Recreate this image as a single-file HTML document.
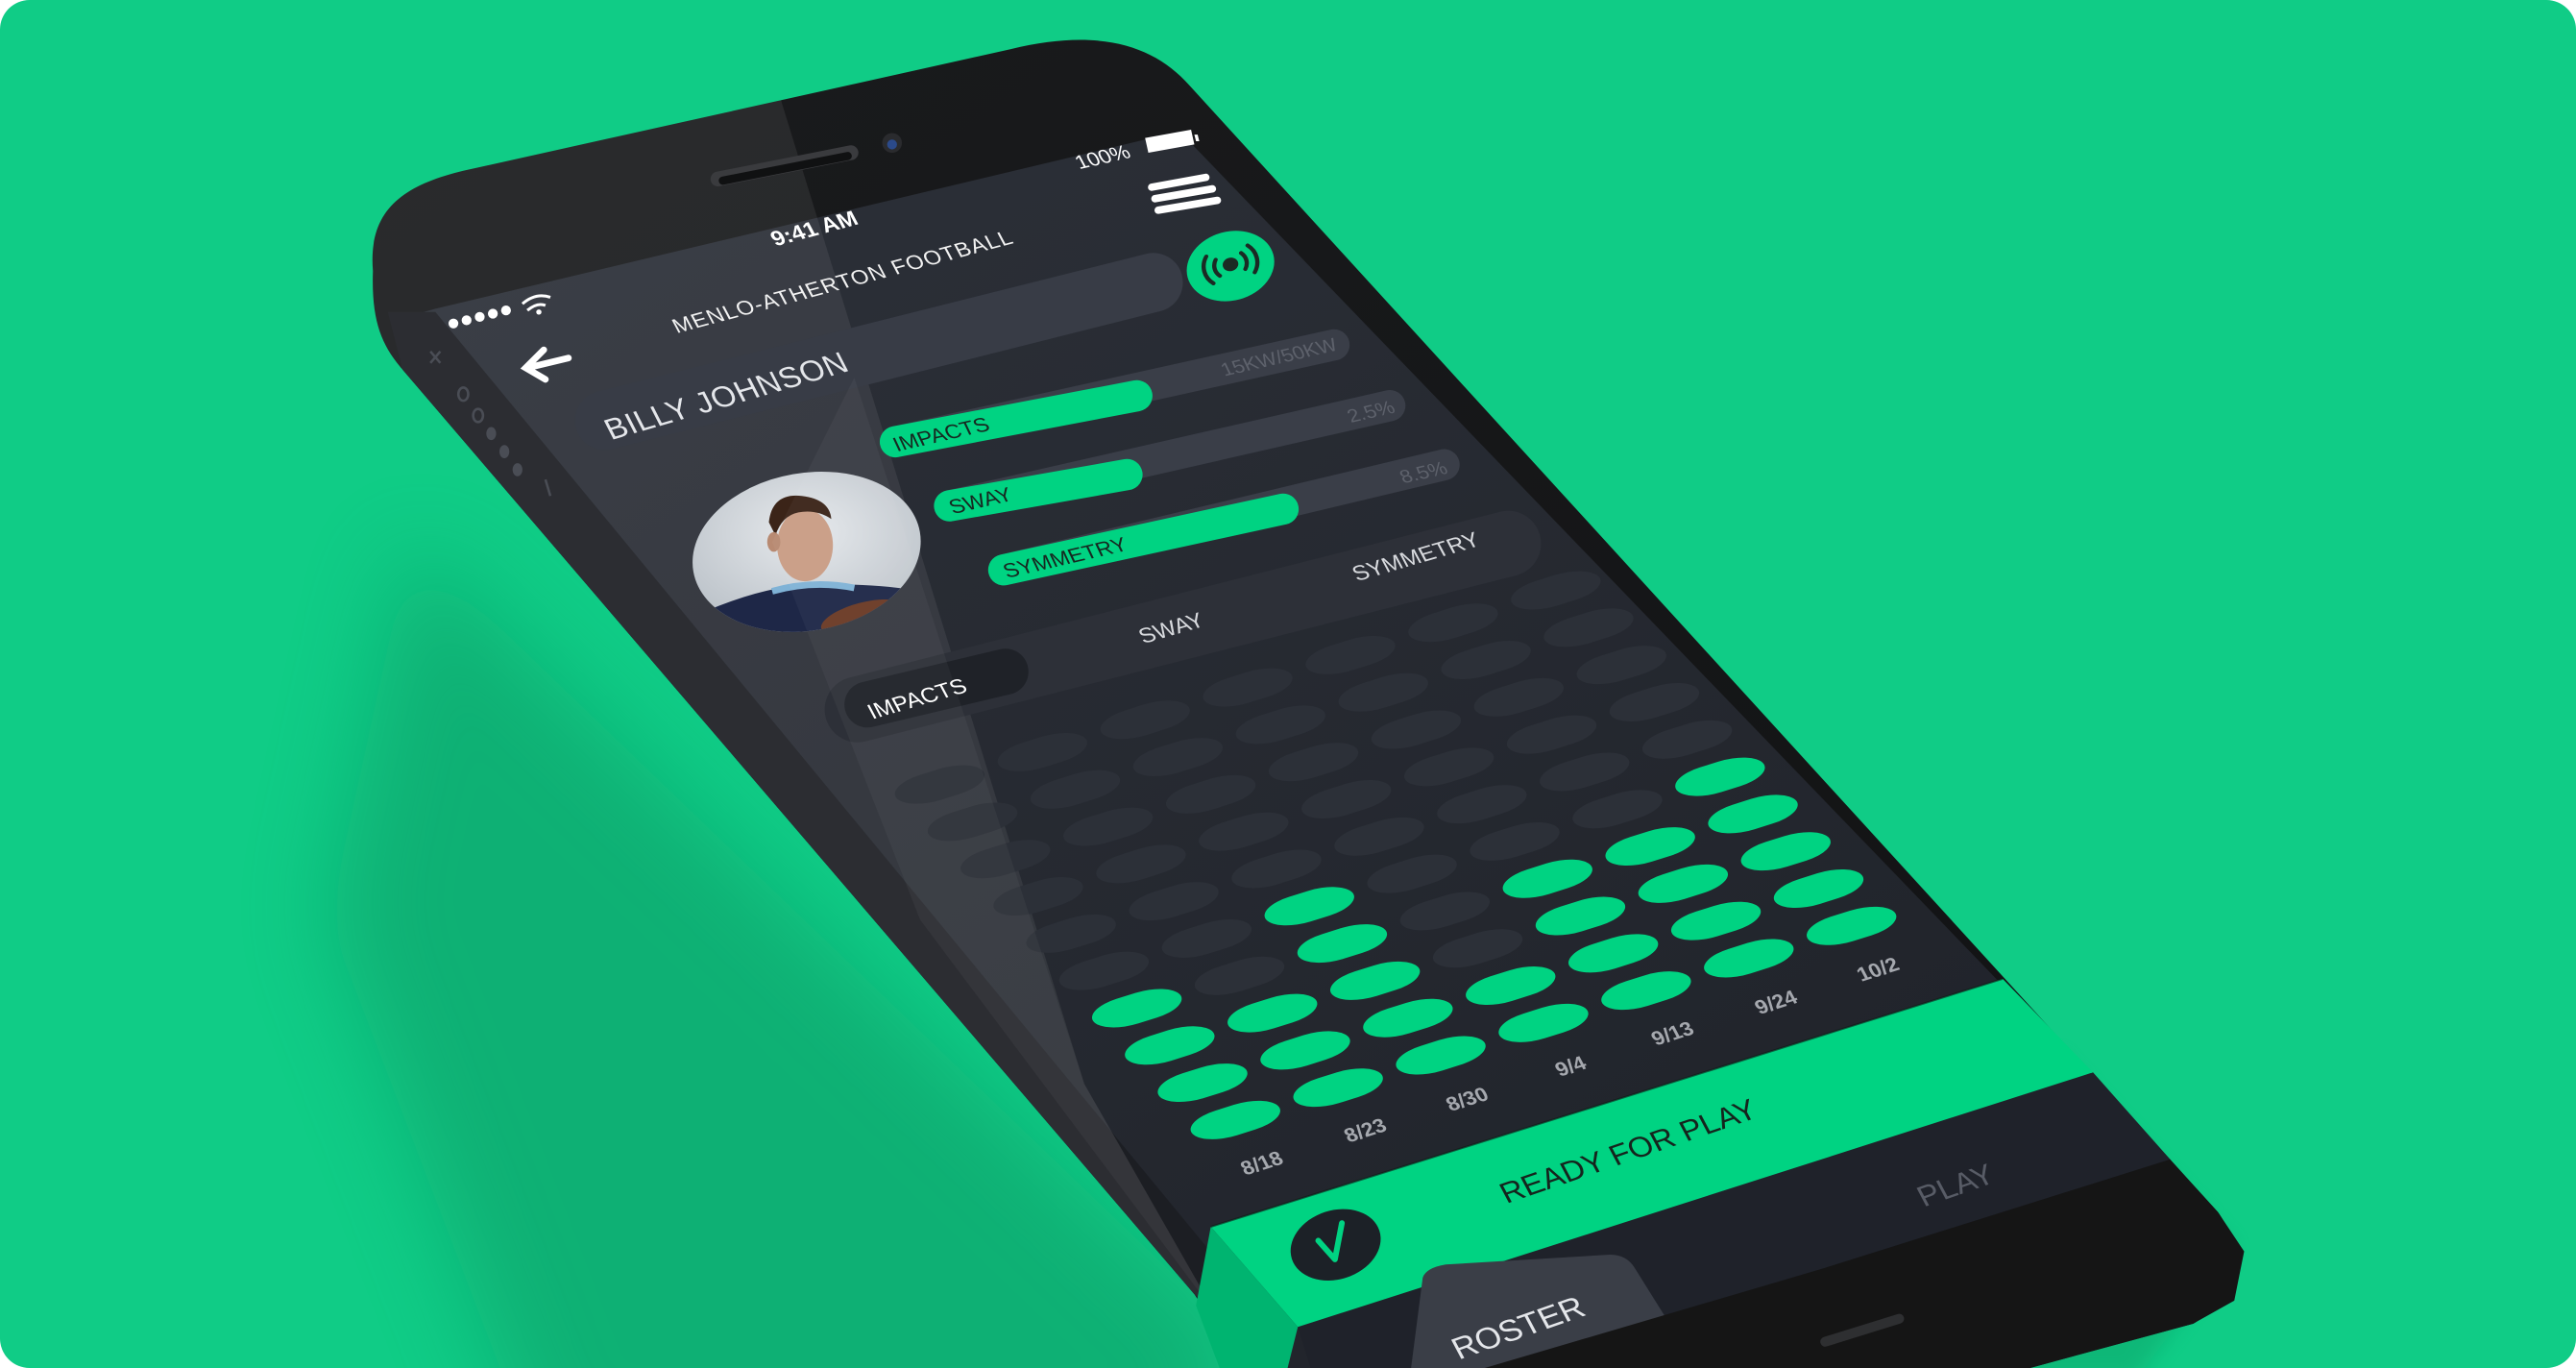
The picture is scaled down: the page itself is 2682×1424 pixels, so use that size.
<!DOCTYPE html>
<html><head><meta charset="utf-8"><style>
html,body{margin:0;padding:0;background:#fff;overflow:hidden;width:2682px;height:1424px;}
svg{display:block;}
text{font-family:"Liberation Sans",sans-serif;}
</style></head><body>
<svg width="2682" height="1424" viewBox="0 0 1568 833" preserveAspectRatio="none" xmlns="http://www.w3.org/2000/svg">
<defs>
<filter id="blur" x="-50%" y="-50%" width="200%" height="200%"><feGaussianBlur stdDeviation="28"/></filter>
<filter id="blur2" x="-20%" y="-20%" width="140%" height="140%"><feGaussianBlur stdDeviation="6"/></filter>
<linearGradient id="scr" x1="0" y1="0" x2="1" y2="1">
<stop offset="0" stop-color="#2d3139"/><stop offset="1" stop-color="#1e2128"/></linearGradient>
<linearGradient id="body" x1="0" y1="0" x2="1" y2="1">
<stop offset="0" stop-color="#1a1b1d"/><stop offset="1" stop-color="#111213"/></linearGradient>
<radialGradient id="sky" cx="0.5" cy="0.4" r="0.6">
<stop offset="0" stop-color="#e6e9ec"/><stop offset="1" stop-color="#b9c0c7"/></radialGradient>
<clipPath id="av"><ellipse cx="491" cy="336" rx="70" ry="48" transform="rotate(-10 491 336)"/></clipPath>
<clipPath id="bodyclip"><path d="M227,165 C224,128 245,113 282,104 L615,30 C668,17 702,27 724,52 L1350,738 C1366,760 1360,792 1335,806 L1210,840 L780,840 L727,788 L245,225 C232,210 226,195 227,165 Z"/></clipPath>
</defs>
<rect x="0" y="0" width="1568" height="833" rx="18" fill="#10cc86"/>
<polygon points="250,330 760,820 740,900 330,900 200,560" fill="#0b8f5e" opacity="0.45" filter="url(#blur)"/>
<polygon points="1250,640 1360,760 1300,840 1200,840" fill="#0a9a63" opacity="0.4" filter="url(#blur2)"/>
<path d="M227,165 C224,128 245,113 282,104 L615,30 C668,17 702,27 724,52 L1350,738 C1366,760 1360,792 1335,806 L1210,840 L780,840 L727,788 L245,225 C232,210 226,195 227,165 Z" fill="url(#body)"/>
<polygon points="240,195 265,188 718,80 1321,706 1111,772 880,840 780,840 727,788 245,225" fill="url(#scr)"/>
<polygon points="236,190 265,190 768,800 760,840 727,788 245,225" fill="#1c1e23"/>
<polygon points="790,808 1274,653 1321,706 1111,772 890,840 800,840" fill="#1f222a"/>
<g clip-path="url(#bodyclip)">
<polygon points="200,120 472,50 660,660 740,800 200,300" fill="#ffffff" opacity="0.07"/>
</g>
<line x1="437" y1="109" x2="518" y2="93" stroke="#3a3b3e" stroke-width="9" stroke-linecap="round"/>
<line x1="440" y1="110" x2="516" y2="95" stroke="#101112" stroke-width="5" stroke-linecap="round"/>
<circle cx="543" cy="87" r="6" fill="#2a2b2e"/><circle cx="543" cy="88" r="3" fill="#2b4a8a"/>
<g fill="#fff">
<circle cx="276" cy="197" r="3"/><circle cx="284" cy="195" r="3"/><circle cx="292" cy="193" r="3"/><circle cx="300" cy="191" r="3"/><circle cx="308" cy="189" r="3"/>
</g>
<path d="M318,185 Q326,178 335,181 M321,189 Q327,184 332,186" stroke="#fff" stroke-width="1.8" fill="none"/>
<circle cx="328" cy="190" r="1.6" fill="#fff"/>
<text transform="matrix(0.966,-0.259,0.45,0.85,472,150)" font-size="14" fill="#fff" font-weight="bold">9:41 AM</text>
<text transform="matrix(0.966,-0.22,0.45,0.85,657,103)" font-size="13" fill="#fff">100%</text>
<polygon points="697,84 725,79 727,88 699,93" fill="#fff"/>
<polygon points="727,82 729,82 730,86 728,86" fill="#fff"/>
<g stroke="#fff" stroke-width="4.5" stroke-linecap="round">
<line x1="701" y1="114" x2="734" y2="108"/><line x1="703" y1="121" x2="738" y2="115"/><line x1="705" y1="128" x2="741" y2="122"/>
</g>
<text transform="matrix(0.966,-0.259,0.45,0.85,412,203)" font-size="13.5" fill="#f2f2f2" letter-spacing="0.6">MENLO-ATHERTON FOOTBALL</text>
<ellipse cx="749" cy="162" rx="27" ry="21" transform="rotate(-15 749 162)" fill="#00d382"/>
<g transform="translate(749,161) rotate(-15) scale(1,0.85)" stroke="#1b2a24" stroke-width="2.6" fill="none" stroke-linecap="round">
<circle cx="0" cy="0" r="3.5" fill="#1b2a24"/>
<path d="M-8,-6 A10,10 0 0 0 -8,6 M8,-6 A10,10 0 0 1 8,6 M-13,-10 A16,16 0 0 0 -13,10 M13,-10 A16,16 0 0 1 13,10"/>
</g>
<g stroke="#fff" stroke-width="4" stroke-linecap="round" fill="none">
<line x1="321" y1="224" x2="346" y2="218"/><polyline points="331,213 320,224 332,231"/>
</g>
<g fill="none" stroke="#4a4d55" stroke-width="1.5">
<path d="M262,214 l6,7 M268,214 l-6,7"/>
<ellipse cx="282" cy="240" rx="3" ry="4"/><ellipse cx="291" cy="253" rx="3" ry="4"/>
</g>
<g fill="#4a4d55"><ellipse cx="299" cy="264" rx="3" ry="4"/><ellipse cx="307" cy="275" rx="3" ry="4"/><ellipse cx="315" cy="286" rx="3" ry="4"/></g>
<line x1="335" y1="302" x2="332" y2="292" stroke="#4a4d55" stroke-width="1.5"/>
<line x1="368" y1="256" x2="702" y2="172" stroke="#383c46" stroke-width="36" stroke-linecap="round"/>
<text transform="matrix(0.96,-0.28,0.45,0.88,372,268)" font-size="19" fill="#e4e6ea" letter-spacing="0.3">BILLY JOHNSON</text>
<g stroke-linecap="round">
<line x1="545" y1="269" x2="812" y2="210" stroke="#3a3e48" stroke-width="19"/>
<line x1="545" y1="269" x2="692" y2="241" stroke="#00d382" stroke-width="19"/>
<line x1="578" y1="308" x2="846" y2="247" stroke="#3a3e48" stroke-width="19"/>
<line x1="578" y1="308" x2="686" y2="289" stroke="#00d382" stroke-width="19"/>
<line x1="611" y1="347" x2="879" y2="283" stroke="#3a3e48" stroke-width="19"/>
<line x1="611" y1="347" x2="781" y2="310" stroke="#00d382" stroke-width="19"/>
</g>
<text transform="matrix(0.974,-0.225,0.4,0.85,546,275)" font-size="13.5" fill="#162820">IMPACTS</text>
<text transform="matrix(0.974,-0.225,0.4,0.85,580,313)" font-size="13.5" fill="#162820">SWAY</text>
<text transform="matrix(0.974,-0.225,0.4,0.85,613,352)" font-size="13.5" fill="#162820">SYMMETRY</text>
<text transform="matrix(0.974,-0.225,0.4,0.85,815,213)" font-size="12.5" fill="#5d616b" text-anchor="end">15KW/50KW</text>
<text transform="matrix(0.974,-0.225,0.4,0.85,850,251)" font-size="12.5" fill="#5d616b" text-anchor="end">2.5%</text>
<text transform="matrix(0.974,-0.225,0.4,0.85,882,288)" font-size="12.5" fill="#5d616b" text-anchor="end">8.5%</text>
<g clip-path="url(#av)">
<rect x="410" y="280" width="160" height="110" fill="url(#sky)"/>
<ellipse cx="490" cy="332" rx="17" ry="22" fill="#c99d85"/>
<path d="M468,318 Q470,300 488,302 Q505,304 506,316 Q497,310 486,312 Q476,314 472,326 Z" fill="#3b2418"/>
<ellipse cx="471" cy="330" rx="4" ry="6" fill="#b88a72"/>
<path d="M430,372 Q470,355 500,356 Q540,355 570,362 L570,395 L430,395 Z" fill="#1e2747"/>
<path d="M470,360 Q495,353 520,358" stroke="#7fb2d6" stroke-width="4" fill="none"/>
<ellipse cx="525" cy="376" rx="26" ry="9" fill="#6b3a25" transform="rotate(-15 525 376)"/>
</g>
<line x1="522" y1="432" x2="918" y2="331" stroke="#2d3038" stroke-width="40" stroke-linecap="round"/>
<line x1="528" y1="429" x2="612" y2="409" stroke="#1f2228" stroke-width="28" stroke-linecap="round"/>
<text transform="matrix(0.96,-0.28,0.45,0.85,531,438)" font-size="14" fill="#fff">IMPACTS</text>
<text transform="matrix(0.96,-0.28,0.45,0.85,696,392)" font-size="14" fill="#d8dade">SWAY</text>
<text transform="matrix(0.96,-0.28,0.45,0.85,826,354)" font-size="14" fill="#d8dade">SYMMETRY</text>
<g transform="matrix(0.625,-0.197,0.20,0.227,572,477.7)">
<g fill="#2c3038">
<rect x="-42" y="-33" width="84" height="66" rx="33"/><rect x="-42" y="67" width="84" height="66" rx="33"/><rect x="-42" y="167" width="84" height="66" rx="33"/><rect x="-42" y="267" width="84" height="66" rx="33"/><rect x="-42" y="367" width="84" height="66" rx="33"/><rect x="-42" y="467" width="84" height="66" rx="33"/>
<rect x="58" y="-33" width="84" height="66" rx="33"/><rect x="58" y="67" width="84" height="66" rx="33"/><rect x="58" y="167" width="84" height="66" rx="33"/><rect x="58" y="267" width="84" height="66" rx="33"/><rect x="58" y="367" width="84" height="66" rx="33"/><rect x="58" y="467" width="84" height="66" rx="33"/><rect x="58" y="567" width="84" height="66" rx="33"/>
<rect x="158" y="-33" width="84" height="66" rx="33"/><rect x="158" y="67" width="84" height="66" rx="33"/><rect x="158" y="167" width="84" height="66" rx="33"/><rect x="158" y="267" width="84" height="66" rx="33"/><rect x="158" y="367" width="84" height="66" rx="33"/>
<rect x="258" y="-33" width="84" height="66" rx="33"/><rect x="258" y="67" width="84" height="66" rx="33"/><rect x="258" y="167" width="84" height="66" rx="33"/><rect x="258" y="267" width="84" height="66" rx="33"/><rect x="258" y="367" width="84" height="66" rx="33"/><rect x="258" y="467" width="84" height="66" rx="33"/><rect x="258" y="567" width="84" height="66" rx="33"/><rect x="258" y="667" width="84" height="66" rx="33"/>
<rect x="358" y="-33" width="84" height="66" rx="33"/><rect x="358" y="67" width="84" height="66" rx="33"/><rect x="358" y="167" width="84" height="66" rx="33"/><rect x="358" y="267" width="84" height="66" rx="33"/><rect x="358" y="367" width="84" height="66" rx="33"/><rect x="358" y="467" width="84" height="66" rx="33"/>
<rect x="458" y="-33" width="84" height="66" rx="33"/><rect x="458" y="67" width="84" height="66" rx="33"/><rect x="458" y="167" width="84" height="66" rx="33"/><rect x="458" y="267" width="84" height="66" rx="33"/><rect x="458" y="367" width="84" height="66" rx="33"/><rect x="458" y="467" width="84" height="66" rx="33"/>
<rect x="558" y="-33" width="84" height="66" rx="33"/><rect x="558" y="67" width="84" height="66" rx="33"/><rect x="558" y="167" width="84" height="66" rx="33"/><rect x="558" y="267" width="84" height="66" rx="33"/><rect x="558" y="367" width="84" height="66" rx="33"/>
</g>
<g fill="#00d382">
<rect x="-42" y="567" width="84" height="66" rx="33"/><rect x="-42" y="667" width="84" height="66" rx="33"/><rect x="-42" y="767" width="84" height="66" rx="33"/><rect x="-42" y="867" width="84" height="66" rx="33"/>
<rect x="58" y="667" width="84" height="66" rx="33"/><rect x="58" y="767" width="84" height="66" rx="33"/><rect x="58" y="867" width="84" height="66" rx="33"/>
<rect x="158" y="467" width="84" height="66" rx="33"/><rect x="158" y="567" width="84" height="66" rx="33"/><rect x="158" y="667" width="84" height="66" rx="33"/><rect x="158" y="767" width="84" height="66" rx="33"/><rect x="158" y="867" width="84" height="66" rx="33"/>
<rect x="258" y="767" width="84" height="66" rx="33"/><rect x="258" y="867" width="84" height="66" rx="33"/>
<rect x="358" y="567" width="84" height="66" rx="33"/><rect x="358" y="667" width="84" height="66" rx="33"/><rect x="358" y="767" width="84" height="66" rx="33"/><rect x="358" y="867" width="84" height="66" rx="33"/>
<rect x="458" y="567" width="84" height="66" rx="33"/><rect x="458" y="667" width="84" height="66" rx="33"/><rect x="458" y="767" width="84" height="66" rx="33"/><rect x="458" y="867" width="84" height="66" rx="33"/>
<rect x="558" y="467" width="84" height="66" rx="33"/><rect x="558" y="567" width="84" height="66" rx="33"/><rect x="558" y="667" width="84" height="66" rx="33"/><rect x="558" y="767" width="84" height="66" rx="33"/><rect x="558" y="867" width="84" height="66" rx="33"/>
</g>
</g>
<g clip-path="url(#bodyclip)">
<polygon points="520,230 660,660 740,800 560,560 470,330" fill="#ffffff" opacity="0.04"/>
</g>
<g font-size="13" fill="#a5a8ae" font-weight="bold" text-anchor="middle">
<text transform="matrix(0.954,-0.3,0.45,0.85,770,712)">8/18</text>
<text transform="matrix(0.954,-0.3,0.45,0.85,833,692)">8/23</text>
<text transform="matrix(0.954,-0.3,0.45,0.85,895,673)">8/30</text>
<text transform="matrix(0.954,-0.3,0.45,0.85,958,653)">9/4</text>
<text transform="matrix(0.954,-0.3,0.45,0.85,1020,633)">9/13</text>
<text transform="matrix(0.954,-0.3,0.45,0.85,1083,614)">9/24</text>
<text transform="matrix(0.954,-0.3,0.45,0.85,1145,594)">10/2</text>
</g>
<polygon points="737,747 1219,596 1274,653 790,808" fill="#00d382"/>
<polygon points="737,747 790,808 782,840 745,840 728,795" fill="#00b470"/>
<line x1="737" y1="747" x2="1219" y2="596" stroke="#0e1a15" stroke-width="1.2" opacity="0.6"/>
<ellipse cx="813" cy="758" rx="28" ry="21" transform="rotate(-18 813 758)" fill="#1c2127"/>
<polyline points="803,754 811,767 819,746" transform="rotate(-10 811 758)" fill="none" stroke="#00d382" stroke-width="3.5" stroke-linecap="round" stroke-linejoin="round"/>
<text transform="matrix(0.945,-0.326,0.45,0.85,917,733)" font-size="19" fill="#15241d">READY FOR PLAY</text>
<text transform="matrix(0.945,-0.33,0.45,0.85,1171,735)" font-size="19" fill="#585c66">PLAY</text>
<path d="M866,778 Q868,772 880,770 L980,764 Q990,764 995,772 L1020,812 L1025,840 L858,840 Z" fill="#3a3e47"/>
<text transform="matrix(0.94,-0.33,0.45,0.85,888,828)" font-size="20" fill="#e4e6ea">ROSTER</text>
<polygon points="1321,706 1350,738 1366,762 1360,792 1335,806 1210,840 880,840 1111,772" fill="#151515"/>
<line x1="1111" y1="817" x2="1156" y2="803" stroke="#2e2f31" stroke-width="6" stroke-linecap="round"/>
</svg>
</body></html>
